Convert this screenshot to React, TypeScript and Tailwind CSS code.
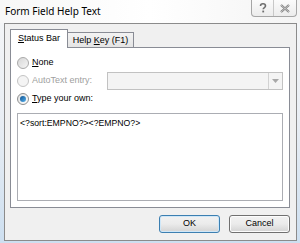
import React from 'react';

const uiFont = "font-['Tahoma','Liberation_Sans',sans-serif]";

const Radio = ( { checked, disabled, soft }: { checked?: boolean; disabled?: boolean; soft?: boolean } ) => (
  <span
    className={ "relative w-[12px] h-[12px] rounded-full border flex items-center justify-center shrink-0 " +
      ( disabled
        ? "border-[#c4c4c4] bg-[#f4f4f4]"
        : soft
          ? "border-[#a9a9a9] bg-gradient-to-br from-[#d6d6d6] to-[#f6f6f6]"
          : "border-[#8e8f8f] bg-gradient-to-br from-[#e2e2e2] to-[#fdfdfd]" ) }>
    { checked && (
      <span className="w-[6px] h-[6px] rounded-full bg-gradient-to-br from-[#0d4f8e] to-[#55b4f0]"/>
    ) }
  </span>
);

export default function App() {
  return (
    <div className={ "w-[300px] h-[243px] flex flex-col bg-gradient-to-b from-[#f6f7f8] via-[#e9eef4] to-[#cddff0] overflow-hidden " + uiFont }>
      {/*---------------------title bar*/ }
      <div className="h-[23px] flex items-start justify-between pl-[5px] pr-[3px] shrink-0 bg-gradient-to-r from-[#f7f7f7] via-[#ffffff] to-[#f4f4f4]">
        <span className="mt-[5px] text-[10px] leading-[13px] text-black font-['Noto_Sans','Open_Sans',sans-serif]">
          Form Field Help Text
        </span>
        <div className="flex h-[17px] border border-t-0 border-[#a6a6a6] rounded-b-[4px] bg-gradient-to-b from-[#fbfbfb] to-[#ececec]">
          <div className="w-[22px] flex items-center justify-center border-r border-[#c8c8c8]">
            <svg width="8" height="10" viewBox="0 0 8 10">
              <path d="M1.5 3 C1.5 1 3 0.8 4 0.8 C5.5 0.8 6.5 1.7 6.5 3 C6.5 4.5 4.2 4.6 4.2 6.3"
                    fill="none" stroke="#6d6d6d" strokeWidth="1.6"/>
              <rect x="3.3" y="7.6" width="1.8" height="1.8" fill="#6d6d6d"/>
            </svg>
          </div>
          <div className="w-[22px] flex items-center justify-center">
            <svg width="10" height="9" viewBox="0 0 10 9">
              <path d="M1 1 L9 8 M9 1 L1 8" stroke="#7a7a7a" strokeWidth="2.2" fill="none"/>
              <path d="M1 1 L9 8 M9 1 L1 8" stroke="#e8e8e8" strokeWidth="0.7" fill="none"/>
            </svg>
          </div>
        </div>
      </div>

      {/*---------------------client area*/ }
      <div className="flex-1 ml-[4px] mr-[3px] mb-[2px] border border-[#8b8b8b] bg-[#f0f0f0] flex flex-col pt-[5px] pl-[5px] pr-[6px]">
        {/*tabs*/ }
        <div className="flex items-end h-[19px] text-[9px] text-black">
          <div className="relative z-10 h-[19px] w-[58px] bg-white border border-b-0 border-[#898c95] flex items-center justify-center pb-[1px]">
            <span><span className="underline">S</span>tatus Bar</span>
          </div>
          <div className="h-[16px] w-[67px] -ml-[1px] border border-b-0 border-[#898c95] bg-gradient-to-b from-[#f3f3f3] to-[#e3e3e3] flex items-center justify-center">
            <span>Help <span className="underline">K</span>ey (F1)</span>
          </div>
        </div>

        {/*panel*/ }
        <div className="-mt-[1px] h-[161px] border border-[#898c95] bg-white flex flex-col pt-[6px] pl-[6px] pr-[6px] text-[9px]">
          <div className="h-[18px] flex items-center gap-[3px]">
            <Radio soft/>
            <span className="text-black"><span className="underline">N</span>one</span>
          </div>
          <div className="h-[18px] flex items-center gap-[3px]">
            <Radio disabled/>
            <span className="text-[#a0a0a0] w-[72px]">AutoText entry:</span>
            <div className="flex-1 h-[18px] border border-[#c2c2c2] bg-[#f4f4f4] flex justify-end">
              <div className="w-[14px] h-full border-l border-[#d2d2d2] flex items-center justify-center">
                <svg width="7" height="4" viewBox="0 0 7 4">
                  <path d="M0 0 L7 0 L3.5 4 Z" fill="#a8a8a8"/>
                </svg>
              </div>
            </div>
          </div>
          <div className="h-[18px] flex items-center gap-[3px]">
            <Radio checked/>
            <span className="text-black"><span className="underline">T</span>ype your own:</span>
          </div>
          <div className="mt-[5px] h-[88px] mb-[6px] border border-[#abadb3] bg-white px-[2px] pt-[4px] text-[8.7px] leading-[11px] text-black">
            &lt;?sort:EMPNO?&gt;&lt;?EMPNO?&gt;
          </div>
        </div>

        {/*buttons*/ }
        <div className="flex justify-end gap-[9px] mt-[7px] text-[9px] text-black">
          <button className="w-[61px] h-[18px] rounded-[3px] border border-[#3c7fb1] bg-gradient-to-b from-[#f2f2f2] via-[#ebebeb] to-[#d3d3d3] shadow-[inset_0_0_0_1px_#cfe7f8]">
            OK
          </button>
          <button className="w-[61px] h-[18px] rounded-[3px] border border-[#707070] bg-gradient-to-b from-[#f2f2f2] via-[#ebebeb] to-[#d3d3d3] shadow-[inset_0_0_0_1px_#fcfcfc]">
            Cancel
          </button>
        </div>
      </div>
    </div>
  );
}
